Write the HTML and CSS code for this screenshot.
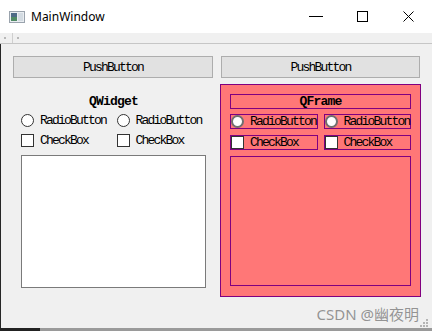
FILE: index.html
```html
<!DOCTYPE html>
<html lang="en">
<head>
    <meta charset="UTF-8">
    <meta name="viewport" content="width=device-width, initial-scale=1.0">
    <title>MainWindow</title>
    <link rel="stylesheet" href="styles.css">
</head>
<body>
    <div class="window">
        <div class="titlebar">
            <svg class="app-icon" width="16" height="12" viewBox="0 0 16 12">
                <rect x="0.5" y="0.5" width="15" height="11" fill="#e9edf1" stroke="#9aa3ad"/>
                <rect x="2" y="2" width="6" height="8" fill="#4f8a64"/>
                <rect x="2" y="2" width="6" height="4" fill="#4d6a86"/>
                <rect x="9" y="2" width="5" height="8" fill="#d3dbe2"/>
            </svg>
            <span class="title">MainWindow</span>
            <div class="caption-buttons">
                <span class="cap">
                    <svg width="14" height="11" viewBox="0 0 14 11"><path d="M0 5.5h14" stroke="#000" stroke-width="1"/></svg>
                </span>
                <span class="cap">
                    <svg width="11" height="11" viewBox="0 0 11 11"><rect x="0.5" y="0.5" width="10" height="10" fill="none" stroke="#000"/></svg>
                </span>
                <span class="cap">
                    <svg width="11" height="11" viewBox="0 0 11 11"><path d="M0.5 0.5l10 10M10.5 0.5l-10 10" stroke="#000" stroke-width="1"/></svg>
                </span>
            </div>
        </div>

        <div class="toolbar">
            <span class="grip-dot"></span>
            <span class="tool-sep"></span>
            <span class="grip-dot"></span>
        </div>

        <div class="central">
            <button class="push">PushButton</button>
            <button class="push push-right">PushButton</button>

            <div class="qwidget">
                <div class="caption">QWidget</div>
                <div class="pair pair-radio">
                    <label class="option"><span class="radio-ind"></span>RadioButton</label>
                    <label class="option"><span class="radio-ind"></span>RadioButton</label>
                </div>
                <div class="pair pair-check">
                    <label class="option"><span class="check-ind"></span>CheckBox</label>
                    <label class="option"><span class="check-ind"></span>CheckBox</label>
                </div>
                <div class="text-edit"></div>
            </div>

            <div class="qframe">
                <div class="caption framed">QFrame</div>
                <div class="pair">
                    <label class="option framed"><span class="radio-ind"></span>RadioButton</label>
                    <label class="option framed"><span class="radio-ind"></span>RadioButton</label>
                </div>
                <div class="pair">
                    <label class="option framed"><span class="check-ind"></span>CheckBox</label>
                    <label class="option framed"><span class="check-ind"></span>CheckBox</label>
                </div>
                <div class="frame-box"></div>
            </div>
        </div>

        <div class="bottom-edge"></div>

        <div class="watermark">CSDN @幽夜明</div>
        <svg class="size-grip" width="8" height="8" viewBox="0 0 8 8">
            <rect x="6" y="0" width="2" height="2" fill="#b4b4b4"/>
            <rect x="3" y="3" width="2" height="2" fill="#b4b4b4"/>
            <rect x="6" y="3" width="2" height="2" fill="#b4b4b4"/>
            <rect x="0" y="6" width="2" height="2" fill="#b4b4b4"/>
            <rect x="3" y="6" width="2" height="2" fill="#b4b4b4"/>
            <rect x="6" y="6" width="2" height="2" fill="#b4b4b4"/>
        </svg>
    </div>
</body>
</html>
```

FILE: styles.css
```css
body {
    margin: 0;
    background-color: #fff;
}

.window {
    width: 432px;
    height: 331px;
    display: flex;
    flex-direction: column;
    background-color: #f0f0f0;
    font-family: "Liberation Mono", "Courier New", monospace;
    font-size: 13px;
    letter-spacing: -1.8px;
    color: #000;
    position: relative;
    overflow: hidden;
}

/* title bar */
.titlebar {
    height: 33px;
    flex-shrink: 0;
    display: flex;
    align-items: center;
    background-color: #fff;
}

.app-icon {
    margin-left: 9px;
}

.title {
    margin-left: 6px;
    font-family: "Noto Sans", "Segoe UI", sans-serif;
    font-size: 12px;
    letter-spacing: 0;
}

.caption-buttons {
    margin-left: auto;
    margin-right: 1px;
    height: 100%;
    display: flex;
}

.cap {
    width: 46px;
    display: flex;
    align-items: center;
    justify-content: center;
}

/* toolbar strip */
.toolbar {
    height: 10px;
    flex-shrink: 0;
    display: flex;
    align-items: center;
    padding-left: 4px;
    border-bottom: 1px solid #c6c6c6;
}

.grip-dot {
    width: 2px;
    height: 2px;
    background-color: #b8b8b8;
}

.tool-sep {
    width: 1px;
    height: 100%;
    margin: 0 4px 0 6px;
    background-color: #cfcfcf;
}

/* central widget */
.central {
    flex: 1;
    display: grid;
    grid-template-columns: 200px 201px;
    grid-template-rows: 22px 213px;
    gap: 6px 7px;
    align-content: start;
    padding: 12px 0 0 12px;
    border-left: 1px solid #262626;
}

.push {
    width: 100%;
    height: 100%;
    margin: 0;
    padding: 0;
    font: inherit;
    letter-spacing: inherit;
    color: #000;
    background-color: #e1e1e1;
    border: 1px solid #adadad;
}

.push-right {
    width: calc(100% - 2px);
    margin-left: 1px;
}

.caption {
    height: 15px;
    box-sizing: border-box;
    display: flex;
    align-items: center;
    justify-content: center;
    font-weight: bold;
    letter-spacing: -0.8px;
    flex-shrink: 0;
}

.pair {
    display: grid;
    grid-template-columns: 1fr 1fr;
    column-gap: 6px;
    flex-shrink: 0;
}

.option {
    height: 15px;
    box-sizing: border-box;
    display: flex;
    align-items: center;
    white-space: nowrap;
}

.radio-ind {
    width: 13px;
    height: 13px;
    box-sizing: border-box;
    margin-right: 6px;
    border: 1px solid #333;
    border-radius: 50%;
    background-color: #fff;
    flex-shrink: 0;
}

.check-ind {
    width: 13px;
    height: 13px;
    box-sizing: border-box;
    margin-right: 6px;
    border: 1px solid #333;
    background-color: #fff;
    flex-shrink: 0;
}

/* left QWidget */
.qwidget {
    display: flex;
    flex-direction: column;
    padding: 10px 7px 9px 8px;
}

.qwidget .pair-radio {
    margin-top: 4px;
}

.qwidget .pair-check {
    margin-top: 5px;
}

.text-edit {
    flex: 1;
    margin-top: 7px;
    background-color: #fff;
    border: 1px solid #7a7a7a;
}

/* right QFrame */
.qframe {
    display: flex;
    flex-direction: column;
    gap: 6px;
    padding: 9px 9px 10px 9px;
    background-color: #ff7777;
    border: 1px solid #800080;
}

.qframe .caption {
    margin-bottom: -1px;
}

.framed {
    border: 1px solid #800080;
}

.framed .radio-ind {
    border: 2px solid #707070;
}

.frame-box {
    flex: 1;
    border: 1px solid #800080;
}

.bottom-edge {
    height: 3px;
    flex-shrink: 0;
    background: linear-gradient(to right, #222 40px, #9a9a9a 40px);
}

/* overlays */
.watermark {
    position: absolute;
    right: 13px;
    bottom: 7px;
    font-family: "Noto Sans", "Noto Sans CJK SC", sans-serif;
    font-size: 15px;
    letter-spacing: 0;
    color: rgba(130, 130, 130, 0.85);
}

.size-grip {
    position: absolute;
    right: 4px;
    bottom: 4px;
}
```
